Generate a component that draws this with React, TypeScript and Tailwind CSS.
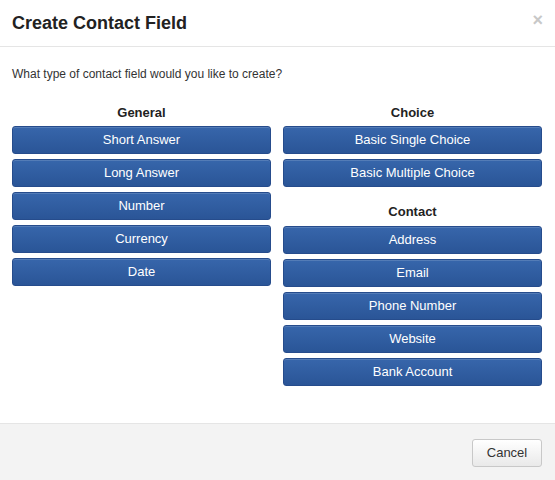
import React from "react";

const Btn = ({ label }: { label: string }) => (
  <button className="h-[28px] w-full rounded-[3px] border border-[#264c8c] bg-gradient-to-b from-[#3766ab] to-[#2a5597] text-[13px] text-white shadow-[inset_0_1px_0_rgba(255,255,255,0.15)]">
    {label}
  </button>
);

export default function App() {
  const general = ["Short Answer", "Long Answer", "Number", "Currency", "Date"];
  const choice = ["Basic Single Choice", "Basic Multiple Choice"];
  const contact = ["Address", "Email", "Phone Number", "Website", "Bank Account"];
  return (
    <div className="flex h-[480px] w-[555px] flex-col bg-white font-['Liberation_Sans',Arial,sans-serif] text-[#333]">
      <div className="flex h-[47px] items-center justify-between border-b border-[#e5e5e5] pl-[12px] pr-[12px]">
        <h1 className="text-[18px] font-bold text-[#222]">Create Contact Field</h1>
        <span className="mb-[7px] text-[18px] font-bold leading-none text-[#c8c8c8]">×</span>
      </div>
      <div className="flex-1 px-[12px] pt-[18px]">
        <p className="text-[12px] text-[#333]">What type of contact field would you like to create?</p>
        <div className="mt-[20px] grid grid-cols-[259px_259px] gap-x-[12px]">
          <div className="flex flex-col">
            <div className="mb-[6px] h-[17px] text-center text-[13px] font-bold text-[#222]">General</div>
            <div className="flex flex-col gap-[5px]">
              {general.map((g) => (
                <Btn key={g} label={g} />
              ))}
            </div>
          </div>
          <div className="flex flex-col">
            <div className="mb-[6px] h-[17px] text-center text-[13px] font-bold text-[#222]">Choice</div>
            <div className="flex flex-col gap-[5px]">
              {choice.map((g) => (
                <Btn key={g} label={g} />
              ))}
            </div>
            <div className="mb-[7px] mt-[15px] h-[17px] text-center text-[13px] font-bold text-[#222]">Contact</div>
            <div className="flex flex-col gap-[5px]">
              {contact.map((g) => (
                <Btn key={g} label={g} />
              ))}
            </div>
          </div>
        </div>
      </div>
      <div className="flex h-[57px] items-center justify-end border-t border-[#e5e5e5] bg-[#f3f3f3] pr-[13px]">
        <button className="mt-[1px] h-[28px] w-[70px] rounded-[3px] border border-[#c8c8c8] bg-gradient-to-b from-white to-[#e9e9e9] text-[13px] text-[#333]">
          Cancel
        </button>
      </div>
    </div>
  );
}
